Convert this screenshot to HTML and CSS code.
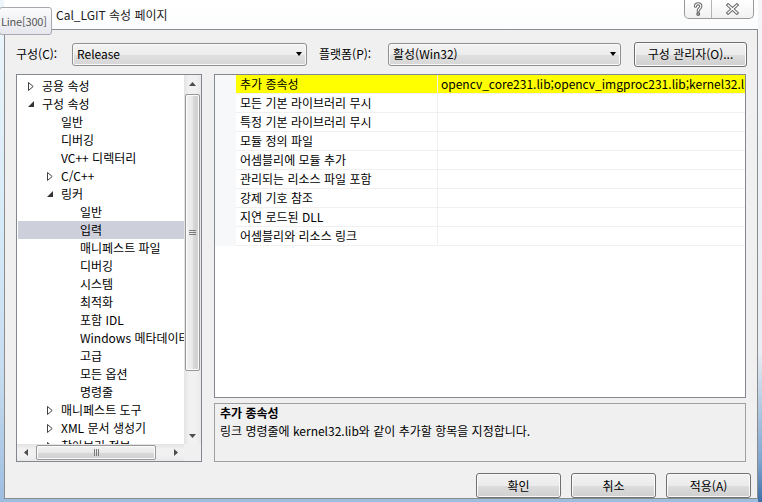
FILE: index.html
```html
<!DOCTYPE html>
<html lang="ko">
<head>
<meta charset="utf-8">
<title>속성 페이지</title>
<link rel="stylesheet" href="styles.css">
</head>
<body>
<div class="screen">
  <div class="glass-left"></div>
  <div class="dialog">
    <div class="titlebar">
      <div class="title">Cal_LGIT 속성 페이지</div>
      <div class="caption-btns">
        <div class="cap help">
          <svg width="26" height="18" viewBox="0 0 26 18"><g fill="none" stroke-linecap="round" stroke-linejoin="round"><path d="M10.5 6.2C10.5 3 15.8 3 15.8 6.2C15.8 8.6 13.2 8.4 13.2 11" stroke="#6a6a6a" stroke-width="3.2"/><path d="M10.5 6.2C10.5 3 15.8 3 15.8 6.2C15.8 8.6 13.2 8.4 13.2 11" stroke="#fff" stroke-width="1.1"/><circle cx="13.2" cy="14" r="1.3" stroke="#6a6a6a" stroke-width="1.4" fill="#fff"/></g></svg>
        </div>
        <div class="cap close">
          <svg width="42" height="18" viewBox="0 0 42 18"><g fill="none" stroke-linecap="square"><path d="M16.5 5L25.5 13M25.5 5L16.5 13" stroke="#6a6a6a" stroke-width="3.4"/><path d="M16.5 5L25.5 13M25.5 5L16.5 13" stroke="#fff" stroke-width="1.3"/></g></svg>
        </div>
      </div>
    </div>
    <div class="client">
      <div class="toprow">
        <span class="lbl lbl1">구성(C):</span>
        <div class="combo combo1"><span class="combo-text">Release</span><span class="combo-arrow"></span></div>
        <span class="lbl lbl2">플랫폼(P):</span>
        <div class="combo combo2"><span class="combo-text">활성(Win32)</span><span class="combo-arrow"></span></div>
        <div class="btn cfg">구성 관리자(O)...</div>
      </div>
      <div class="main">
        <div class="tree">
          <div class="tree-body">
            <div class="tree-list">
              <div class="node lv0"><span class="exp"><svg width="6" height="9" viewBox="0 0 6 9"><path d="M0.5 0.5L5.2 4.5L0.5 8.5Z" fill="#fff" stroke="#404040"/></svg></span>공용 속성</div>
              <div class="node lv0"><span class="exp"><svg width="6" height="6" viewBox="0 0 6 6"><path d="M6 0L6 6L0 6Z" fill="#333"/></svg></span>구성 속성</div>
              <div class="node lv1"><span class="exp"></span>일반</div>
              <div class="node lv1"><span class="exp"></span>디버깅</div>
              <div class="node lv1"><span class="exp"></span>VC++ 디렉터리</div>
              <div class="node lv1"><span class="exp"><svg width="6" height="9" viewBox="0 0 6 9"><path d="M0.5 0.5L5.2 4.5L0.5 8.5Z" fill="#fff" stroke="#404040"/></svg></span>C/C++</div>
              <div class="node lv1"><span class="exp"><svg width="6" height="6" viewBox="0 0 6 6"><path d="M6 0L6 6L0 6Z" fill="#333"/></svg></span>링커</div>
              <div class="node lv2"><span class="exp"></span>일반</div>
              <div class="node lv2 selected"><span class="exp"></span>입력</div>
              <div class="node lv2"><span class="exp"></span>매니페스트 파일</div>
              <div class="node lv2"><span class="exp"></span>디버깅</div>
              <div class="node lv2"><span class="exp"></span>시스템</div>
              <div class="node lv2"><span class="exp"></span>최적화</div>
              <div class="node lv2"><span class="exp"></span>포함 IDL</div>
              <div class="node lv2"><span class="exp"></span>Windows 메타데이터</div>
              <div class="node lv2"><span class="exp"></span>고급</div>
              <div class="node lv2"><span class="exp"></span>모든 옵션</div>
              <div class="node lv2"><span class="exp"></span>명령줄</div>
              <div class="node lv1"><span class="exp"><svg width="6" height="9" viewBox="0 0 6 9"><path d="M0.5 0.5L5.2 4.5L0.5 8.5Z" fill="#fff" stroke="#404040"/></svg></span>매니페스트 도구</div>
              <div class="node lv1"><span class="exp"><svg width="6" height="9" viewBox="0 0 6 9"><path d="M0.5 0.5L5.2 4.5L0.5 8.5Z" fill="#fff" stroke="#404040"/></svg></span>XML 문서 생성기</div>
              <div class="node lv1"><span class="exp"><svg width="6" height="9" viewBox="0 0 6 9"><path d="M0.5 0.5L5.2 4.5L0.5 8.5Z" fill="#fff" stroke="#404040"/></svg></span>찾아보기 정보</div>
            </div>
            <div class="vscroll">
              <div class="sb-btn"><svg width="7" height="4" viewBox="0 0 7 4"><path d="M3.5 0L7 4L0 4Z" fill="#4d4d4d"/></svg></div>
              <div class="vtrack">
                <div class="vthumb"><svg width="7" height="5" viewBox="0 0 7 5"><path d="M0 0.5H7M0 2.5H7M0 4.5H7" stroke="#7a7a7a"/></svg></div>
              </div>
              <div class="sb-btn"><svg width="7" height="4" viewBox="0 0 7 4"><path d="M0 0L7 0L3.5 4Z" fill="#4d4d4d"/></svg></div>
            </div>
          </div>
          <div class="hscroll">
            <div class="sb-btn"><svg width="4" height="7" viewBox="0 0 4 7"><path d="M4 0L4 7L0 3.5Z" fill="#4d4d4d"/></svg></div>
            <div class="htrack">
              <div class="hthumb"><svg width="5" height="7" viewBox="0 0 5 7"><path d="M0.5 0V7M2.5 0V7M4.5 0V7" stroke="#7a7a7a"/></svg></div>
            </div>
            <div class="sb-btn"><svg width="4" height="7" viewBox="0 0 4 7"><path d="M0 0L4 3.5L0 7Z" fill="#4d4d4d"/></svg></div>
            <div class="sb-corner"></div>
          </div>
        </div>
        <div class="rightcol">
          <div class="grid">
            <div class="prow hl"><span class="gut"></span><span class="pname">추가 종속성</span><span class="pval">opencv_core231.lib;opencv_imgproc231.lib;kernel32.lib;user32.lib;gdi32.lib</span></div>
            <div class="prow"><span class="gut"></span><span class="pname">모든 기본 라이브러리 무시</span><span class="pval"></span></div>
            <div class="prow"><span class="gut"></span><span class="pname">특정 기본 라이브러리 무시</span><span class="pval"></span></div>
            <div class="prow"><span class="gut"></span><span class="pname">모듈 정의 파일</span><span class="pval"></span></div>
            <div class="prow"><span class="gut"></span><span class="pname">어셈블리에 모듈 추가</span><span class="pval"></span></div>
            <div class="prow"><span class="gut"></span><span class="pname">관리되는 리소스 파일 포함</span><span class="pval"></span></div>
            <div class="prow"><span class="gut"></span><span class="pname">강제 기호 참조</span><span class="pval"></span></div>
            <div class="prow"><span class="gut"></span><span class="pname">지연 로드된 DLL</span><span class="pval"></span></div>
            <div class="prow"><span class="gut"></span><span class="pname">어셈블리와 리소스 링크</span><span class="pval"></span></div>
          </div>
          <div class="desc">
            <div class="desc-title">추가 종속성</div>
            <div class="desc-text">링크 명령줄에 kernel32.lib와 같이 추가할 항목을 지정합니다.</div>
          </div>
        </div>
      </div>
      <div class="buttons">
        <div class="btn dlg">확인</div>
        <div class="btn dlg">취소</div>
        <div class="btn dlg">적용(A)</div>
      </div>
    </div>
  </div>
  <div class="glass-right"></div>
  <div class="tooltip">Line[300]</div>
</div>
</body>
</html>
```

FILE: styles.css
```css
* { box-sizing: border-box; margin: 0; padding: 0; }
html, body { width: 762px; height: 502px; overflow: hidden; }
body {
  font-family: "Noto Sans CJK KR", "Noto Sans", sans-serif;
  font-size: 12px;
  color: #000;
  background: #fff;
}
.screen {
  position: relative;
  display: flex;
  width: 762px;
  height: 502px;
  background: linear-gradient(to bottom, #eef6fb 0%, #d9ecf8 40%, #c6dcf0 75%, #9dbde0 100%);
}
.glass-left { width: 4px; flex: none; }
.glass-right {
  width: 4px; flex: none;
  background: linear-gradient(to bottom, #f4f6f8 0%, #e8eef4 70%, #7fa6d0 92%, #3d6fa8 100%);
}
.dialog {
  width: 754px; height: 499px; flex: none;
  display: flex; flex-direction: column;
  background: #fff;
}

/* title bar */
.titlebar {
  height: 29px; flex: none;
  display: flex; align-items: flex-start;
  background: linear-gradient(to bottom, #ffffff, #fbfcfd);
}
.title {
  margin: 6px 0 0 52px;
  line-height: 18px;
  font-size: 12px;
  color: #1a1a1a;
  white-space: nowrap;
}
.caption-btns {
  margin-left: auto;
  margin-right: 4px;
  display: flex;
  height: 19px;
  border: 1px solid #9a9a9a;
  border-top: none;
  border-radius: 0 0 5px 5px;
  background: linear-gradient(to bottom, #ffffff, #f1f1f1);
  overflow: hidden;
}
.cap { display: flex; align-items: center; justify-content: center; }
.cap.help { width: 27px; border-right: 1px solid #b5b5b5; }
.cap.close { width: 41px; }

/* client */
.client {
  flex: 1;
  display: flex; flex-direction: column;
  background: #f0f0f0;
  border: 1px solid #8c8c8c;
  padding: 12px 0 0 11px;
}
.toprow { height: 24px; display: flex; align-items: center; }
.lbl { line-height: 18px; white-space: nowrap; }
.lbl1 { width: 56px; }
.lbl2 { width: 69px; margin-left: 12px; }
.combo {
  height: 23px;
  display: flex; align-items: center;
  border: 1px solid #8e8f8f;
  border-radius: 3px;
  background: linear-gradient(to bottom, #f4f4f4 0%, #ececec 50%, #e0e0e0 51%, #d6d6d6 100%);
  box-shadow: inset 0 0 0 1px #fafafa;
  padding-left: 4px;
}
.combo1 { width: 235px; }
.combo2 { width: 233px; }
.combo-text { flex: 1; line-height: 18px; white-space: nowrap; }
.combo-arrow {
  width: 0; height: 0;
  margin-right: 4px;
  border-left: 3.5px solid transparent;
  border-right: 3.5px solid transparent;
  border-top: 4px solid #000;
}
.btn {
  display: flex; align-items: center; justify-content: center;
  border: 1px solid #707070;
  border-radius: 3px;
  background: linear-gradient(to bottom, #f2f2f2 0%, #ebebeb 50%, #dddddd 51%, #cfcfcf 100%);
  box-shadow: inset 0 0 0 1px #fbfbfb;
  line-height: 18px;
  white-space: nowrap;
}
.cfg { width: 113px; height: 25px; margin-left: 13px; }

/* main area */
.main { height: 388px; margin-top: 8px; display: flex; }
.tree {
  width: 186px; flex: none;
  border: 1px solid #828790;
  background: #fff;
  display: flex; flex-direction: column;
}
.tree-body { flex: 1; display: flex; min-height: 0; }
.tree-list {
  flex: 1;
  overflow: hidden;
  padding-top: 2px;
}
.node {
  height: 18px;
  line-height: 18px;
  display: flex; align-items: center;
  white-space: nowrap;
  margin-left: 1px;
}
.node.lv0 { padding-left: 7px; }
.node.lv1 { padding-left: 26px; }
.node.lv2 { padding-left: 45px; }
.node.selected { background: #cdcfdb; }
.exp { width: 17px; flex: none; display: flex; align-items: center; padding-left: 3px; }

.vscroll {
  width: 17px; flex: none;
  display: flex; flex-direction: column;
  background: linear-gradient(to right, #e3e3e3, #f1f1f1 30%, #f1f1f1 70%, #e8e8e8);
}
.sb-btn {
  width: 17px; height: 17px; flex: none;
  display: flex; align-items: center; justify-content: center;
}
.vtrack { flex: 1; padding: 2px 1px 0 1px; }
.vthumb {
  height: 277px;
  border: 1px solid #979797;
  border-radius: 2px;
  background: linear-gradient(to right, #f3f3f3, #e8e8e8 50%, #d9d9d9 51%, #cfcfcf);
  box-shadow: inset 0 0 0 1px #fbfbfb;
  display: flex; align-items: center; justify-content: center;
}
.hscroll {
  height: 17px; flex: none;
  display: flex;
  background: linear-gradient(to bottom, #e3e3e3, #f1f1f1 30%, #f1f1f1 70%, #e8e8e8);
}
.htrack { width: 133px; padding: 0 0 0 2px; display: flex; align-items: center; }
.hthumb {
  width: 120px; height: 15px;
  border: 1px solid #979797;
  border-radius: 2px;
  background: linear-gradient(to bottom, #f3f3f3, #e8e8e8 50%, #d9d9d9 51%, #cfcfcf);
  box-shadow: inset 0 0 0 1px #fbfbfb;
  display: flex; align-items: center; justify-content: center;
}
.sb-corner { width: 17px; flex: none; background: #f0f0f0; margin-left: auto; }

.rightcol {
  width: 532px; margin-left: 12px; flex: none;
  display: flex; flex-direction: column;
}
.grid {
  height: 324px; flex: none;
  border: 1px solid #828790;
  background: #fff;
}
.prow { height: 19px; display: flex; }
.gut { width: 21px; flex: none; background: #f7f8fa; }
.pname {
  width: 202px; flex: none;
  padding-left: 4px;
  line-height: 18px;
  border-right: 1px solid #f0f0f0;
  border-bottom: 1px solid #f0f0f0;
  white-space: nowrap; overflow: hidden;
}
.pval {
  flex: 1;
  padding-left: 3px;
  line-height: 18px;
  border-bottom: 1px solid #f0f0f0;
  white-space: nowrap; overflow: hidden;
}
.prow.hl .pname, .prow.hl .pval { background: #ffff00; }
.desc {
  height: 59px; margin-top: 5px;
  border: 1px solid #a0a0a0;
  background: #f0f0f0;
  padding-left: 5px;
  line-height: 18px;
}
.desc-title { font-weight: 700; }

.buttons {
  height: 25px; margin-top: 11px;
  display: flex; justify-content: flex-end; gap: 10px;
  padding-right: 6px;
}
.dlg { width: 85px; height: 25px; }

/* tooltip overlay */
.tooltip {
  position: absolute;
  left: -1px; top: 7px;
  width: 53px; height: 28px;
  border: 1px solid #a8a8b0;
  border-radius: 3px;
  background: linear-gradient(to bottom, #fbfbfc, #e6e7ee);
  color: #575757;
  font-size: 11px;
  letter-spacing: -0.2px;
  line-height: 26px;
  padding-left: 1px;
  white-space: nowrap;
}
```
